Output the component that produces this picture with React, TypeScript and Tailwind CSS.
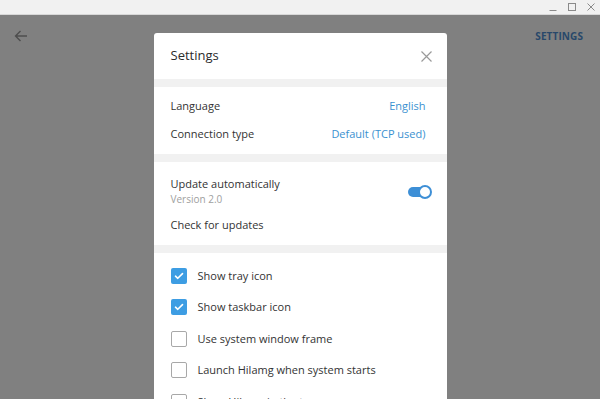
import { useState } from 'react';

const font = { fontFamily: '"Open Sans", "Noto Sans", sans-serif' };

function Checkbox({ checked }: { checked: boolean }) {
  return checked ? (
    <span className="flex h-[16px] w-[16px] items-center justify-center rounded-[2px] bg-[#3d9de3]">
      <svg width="10" height="8" viewBox="0 0 10 8" fill="none">
        <path d="M1.5 4.2 L3.8 6.3 L8.5 1.6" stroke="white" strokeWidth="1.6" strokeLinecap="round" strokeLinejoin="round" />
      </svg>
    </span>
  ) : (
    <span className="block h-[16px] w-[16px] rounded-[2px] border-[1.5px] border-[#a8a8a8] bg-white" />
  );
}

export default function App() {
  const [auto, setAuto] = useState(true);
  const [opts, setOpts] = useState([
    { label: 'Show tray icon', on: true },
    { label: 'Show taskbar icon', on: true },
    { label: 'Use system window frame', on: false },
    { label: 'Launch Hilamg when system starts', on: false },
    { label: 'Show Hilamg in the tray', on: false },
  ]);

  return (
    <div className="flex h-[399px] w-[600px] flex-col overflow-hidden bg-[#808080]" style={font}>
      {/* window title bar */}
      <div className="flex h-[15px] shrink-0 items-center justify-end gap-[11px] border-b border-[#d8d8d8] bg-[#f1f1f1] pr-[5px]">
        <svg width="8" height="8" viewBox="0 0 8 8"><path d="M0.5 7.5 H7.5" stroke="#8a8a8a" strokeWidth="1" /></svg>
        <svg width="8" height="8" viewBox="0 0 8 8"><rect x="0.5" y="0.5" width="7" height="7" fill="none" stroke="#8a8a8a" strokeWidth="1" /></svg>
        <svg width="8" height="8" viewBox="0 0 8 8"><path d="M0.5 0.5 L7.5 7.5 M7.5 0.5 L0.5 7.5" stroke="#8a8a8a" strokeWidth="1" /></svg>
      </div>

      <div className="relative flex-1">
        {/* app header (dimmed by overlay) */}
        <div className="flex h-[42px] items-center justify-between pl-[14px] pr-[17px]">
          <svg width="14" height="12" viewBox="0 0 14 12" fill="none">
            <path d="M13 6 H1.5 M6.5 1 L1.5 6 L6.5 11" stroke="#4d4d4d" strokeWidth="1.4" />
          </svg>
          <span className="text-[10px] font-bold tracking-[0.1px] text-[#28486a]">SETTINGS</span>
        </div>

        {/* modal */}
        <div className="absolute inset-x-0 top-[18px] mx-auto w-[293px] rounded-t-[3px] bg-white text-[#333]">
          <div className="flex h-[46px] items-center justify-between pl-[17px] pr-[15px]">
            <span className="text-[13px] text-[#2b2b2b]">Settings</span>
            <svg width="11" height="11" viewBox="0 0 11 11">
              <path d="M0.5 0.5 L10.5 10.5 M10.5 0.5 L0.5 10.5" stroke="#9a9a9a" strokeWidth="1.2" />
            </svg>
          </div>
          <div className="h-[8px] bg-[#f1f1f1]" />

          <div className="pl-[17px] pr-[21px] pt-[5px] pb-[6px] text-[11px]">
            <div className="flex h-[28px] items-center justify-between">
              <span>Language</span>
              <span className="text-[#3a91d0]">English</span>
            </div>
            <div className="flex h-[28px] items-center justify-between">
              <span>Connection type</span>
              <span className="text-[#3a91d0]">Default (TCP used)</span>
            </div>
          </div>
          <div className="h-[8px] bg-[#f1f1f1]" />

          <div className="pl-[17px] pr-[16px] pt-[14px] pb-[10px] text-[11px]">
            <div className="flex items-center justify-between">
              <div className="flex flex-col">
                <span className="leading-[15px]">Update automatically</span>
                <span className="text-[10px] leading-[16px] text-[#a0a0a0]">Version 2.0</span>
              </div>
              <button
                onClick={() => setAuto(!auto)}
                className={`relative mr-[1px] h-[10px] w-[22px] rounded-full ${auto ? 'bg-[#3d8fd6]' : 'bg-[#c8c8c8]'}`}
              >
                <span
                  className={`absolute top-[-2px] h-[14px] w-[14px] rounded-full border-[2px] bg-white ${auto ? 'right-[-2px] border-[#3d8fd6]' : 'left-[-2px] border-[#c8c8c8]'}`}
                />
              </button>
            </div>
            <div className="flex h-[28px] items-center pt-[9px]">Check for updates</div>
          </div>
          <div className="h-[8px] bg-[#f1f1f1]" />

          <div className="px-[17px] pt-[7px] text-[11px]">
            {opts.map((o, i) => (
              <div
                key={o.label}
                className="flex h-[31.5px] cursor-pointer items-center gap-[11px]"
                onClick={() => setOpts(opts.map((x, j) => (j === i ? { ...x, on: !x.on } : x)))}
              >
                <Checkbox checked={o.on} />
                <span>{o.label}</span>
              </div>
            ))}
          </div>
        </div>
      </div>
    </div>
  );
}
